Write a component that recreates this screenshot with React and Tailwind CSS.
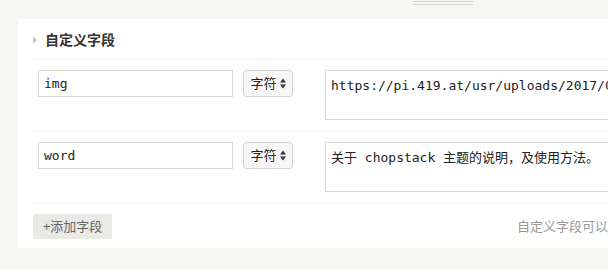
import React from 'react';

const fields = [
  { name: 'img', value: 'https://pi.419.at/usr/uploads/2017/06/chopstack.png' },
  { name: 'word', value: '关于 chopstack 主题的说明，及使用方法。' },
];

const sans = { fontFamily: '"Liberation Sans", "Noto Sans CJK SC", sans-serif' };
const mono = { fontFamily: '"DejaVu Sans Mono", "Noto Sans CJK SC", monospace' };

const SortIcon = () => (
  <svg width="6" height="11" viewBox="0 0 6 11" className="ml-[3px]">
    <path d="M3 0.5 L6 4.5 L0 4.5 Z" fill="#333" />
    <path d="M3 10.5 L6 6.5 L0 6.5 Z" fill="#333" />
  </svg>
);

const FieldRow = ({ field }) => (
  <div className="flex items-start border-b border-[#f0f0ec] pt-[10px] pb-[11px]">
    <input
      type="text"
      defaultValue={field.name}
      className="ml-[5px] h-[27px] w-[195px] shrink-0 border border-[#d9d9d6] bg-white px-[5px] text-[13px] text-[#222] outline-none"
      style={mono}
    />
    <div
      className="ml-[10px] flex h-[27px] w-[50px] shrink-0 items-center justify-center rounded-[4px] border border-[#d2d2cf] bg-[#f7f7f7] text-[13px] text-[#222]"
      style={sans}
    >
      字符
      <SortIcon />
    </div>
    <textarea
      defaultValue={field.value}
      className="ml-[32px] h-[50px] w-[320px] shrink-0 resize-none overflow-hidden whitespace-pre border border-[#d9d9d6] bg-white pl-[5px] pr-[6px] pt-[6px] text-[13px] leading-[18px] text-[#222] outline-none"
      style={mono}
    />
  </div>
);

export default function App() {
  return (
    <div className="h-[269px] w-full overflow-hidden bg-[#f6f6f3]" style={sans}>
      <div className="ml-[413px] flex h-[19px] w-[60px] flex-col gap-[2px] pt-[1px]">
        <div className="h-px bg-[#d4d4d0]" />
        <div className="h-px bg-[#d4d4d0]" />
      </div>

      <div className="ml-[18px] w-[700px] bg-white pl-[15px]">
        <div className="flex h-[41px] items-center border-b border-[#f0f0ec] pt-[2px]">
          <span className="h-0 w-0 border-y-[4px] border-l-[4px] border-y-transparent border-l-[#c4c4c4]" />
          <span className="ml-[8px] text-[14px] font-bold text-[#333]">自定义字段</span>
        </div>

        {fields.map((f) => (
          <FieldRow key={f.name} field={f} />
        ))}

        <div className="flex items-center pt-[10px] pb-[9px]">
          <button className="h-[25px] w-[79px] shrink-0 whitespace-nowrap rounded-[2px] bg-[#e9e9e6] text-[13px] text-[#666]">
            +添加字段
          </button>
          <span className="ml-[405px] shrink-0 whitespace-nowrap text-[13px] text-[#999]">
            自定义字段可以扩展你的模板功能
          </span>
        </div>
      </div>
    </div>
  );
}
